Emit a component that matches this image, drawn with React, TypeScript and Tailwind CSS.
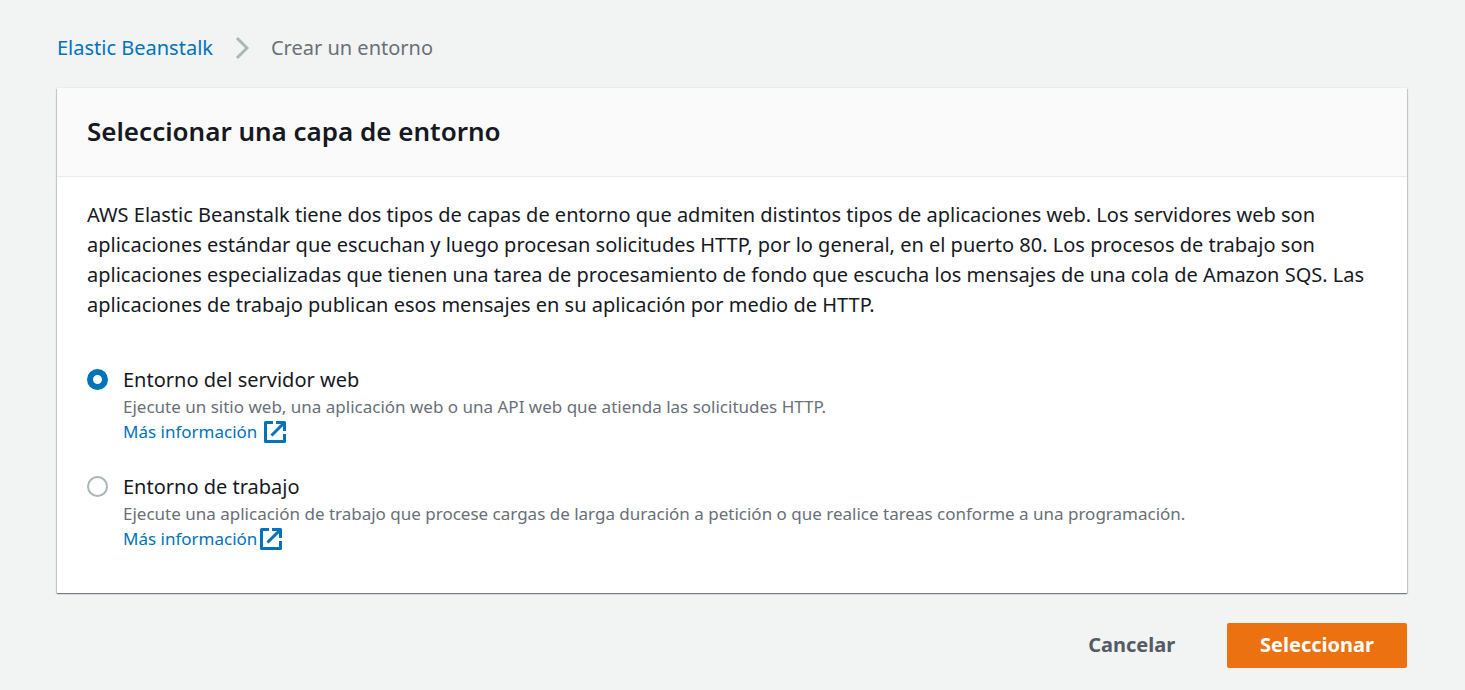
import React, { useState } from "react";

function ExternalIcon() {
  return (
    <svg width="22" height="22" viewBox="0 0 22 22" fill="none" stroke="currentColor" strokeWidth="3" strokeLinejoin="round" className="shrink-0" aria-hidden="true">
      <path d="M9 1.5H1.5V20.5H20.5V13" />
      <path d="M12 1.5H20.5V10" />
      <path d="M20 2L7.5 14.5" />
    </svg>
  );
}

const options = [
  {
    id: "web",
    title: "Entorno del servidor web",
    text: "Ejecute un sitio web, una aplicación web o una API web que atienda las solicitudes HTTP.",
    linkGap: "gap-[7px]",
  },
  {
    id: "worker",
    title: "Entorno de trabajo",
    text: "Ejecute una aplicación de trabajo que procese cargas de larga duración a petición o que realice tareas conforme a una programación.",
    linkGap: "gap-[3px]",
  },
];

export default function App() {
  const [tier, setTier] = useState("web");
  return (
    <div className="min-h-screen bg-[#f2f3f3] pr-[58px] pl-[57px] pt-[33px] pb-[22px] font-['Noto_Sans',sans-serif] text-[20px] leading-[30px] text-[#16191f]">
      <nav aria-label="Ruta" className="flex items-center gap-[22px] text-[#687078]">
        <a href="#inicio" className="text-[#0073bb]">Elastic Beanstalk</a>
        <svg width="14" height="24" viewBox="0 0 14 24" fill="none" stroke="#aab7b8" strokeWidth="3" aria-hidden="true">
          <path d="M2 2L12 12L2 22" />
        </svg>
        <span>Crear un entorno</span>
      </nav>
      <main className="mt-[25px] bg-white shadow-[0_1px_1px_rgba(0,28,36,0.35),1px_1px_1px_rgba(0,28,36,0.15),-1px_1px_1px_rgba(0,28,36,0.15),0_-1px_0_#eaeded]">
        <header className="border-b border-[#eaeded] bg-[#fafafa] px-[30px] pt-[25px] pb-[27px]">
          <h1 className="text-[26px] leading-9 font-semibold">Seleccionar una capa de entorno</h1>
        </header>
        <div className="px-[30px] pt-[23px] pb-[42px]">
          <p>
            AWS Elastic Beanstalk tiene dos tipos de capas de entorno que admiten distintos tipos de aplicaciones web. Los servidores web son aplicaciones estándar que escuchan y luego procesan solicitudes HTTP, por lo general, en el puerto 80. Los procesos de trabajo son aplicaciones especializadas que tienen una tarea de procesamiento de fondo que escucha los mensajes de una cola de Amazon SQS. Las aplicaciones de trabajo publican esos mensajes en su aplicación por medio de HTTP.
          </p>
          <div className="mt-[45px] flex flex-col gap-7">
            {options.map((o) => (
              <div key={o.id} className="flex items-start gap-[15px]">
                <input id={o.id} type="radio" name="tier" checked={tier === o.id} onChange={() => setTier(o.id)} className="mt-1 h-[21px] w-[21px] shrink-0 appearance-none rounded-full border-2 border-[#aab7b8] bg-white checked:border-[6px] checked:border-[#0073bb]" />
                <div>
                  <label htmlFor={o.id} className="block leading-[29px]">{o.title}</label>
                  <p className="text-[17px] leading-[25px] text-[#687078]">{o.text}</p>
                  <a href="#info" className={"flex w-fit items-center text-[17px] leading-[25px] text-[#0073bb] " + o.linkGap}>
                    Más información
                    <ExternalIcon />
                  </a>
                </div>
              </div>
            ))}
          </div>
        </div>
      </main>
      <div className="mt-[30px] flex justify-end gap-5 font-bold">
        <button type="button" className="h-[45px] px-8 pb-0.5 text-[#545b64]">Cancelar</button>
        <button type="button" className="h-[45px] rounded-[2px] bg-[#ec7211] px-[33px] pb-0.5 text-white">Seleccionar</button>
      </div>
    </div>
  );
}
